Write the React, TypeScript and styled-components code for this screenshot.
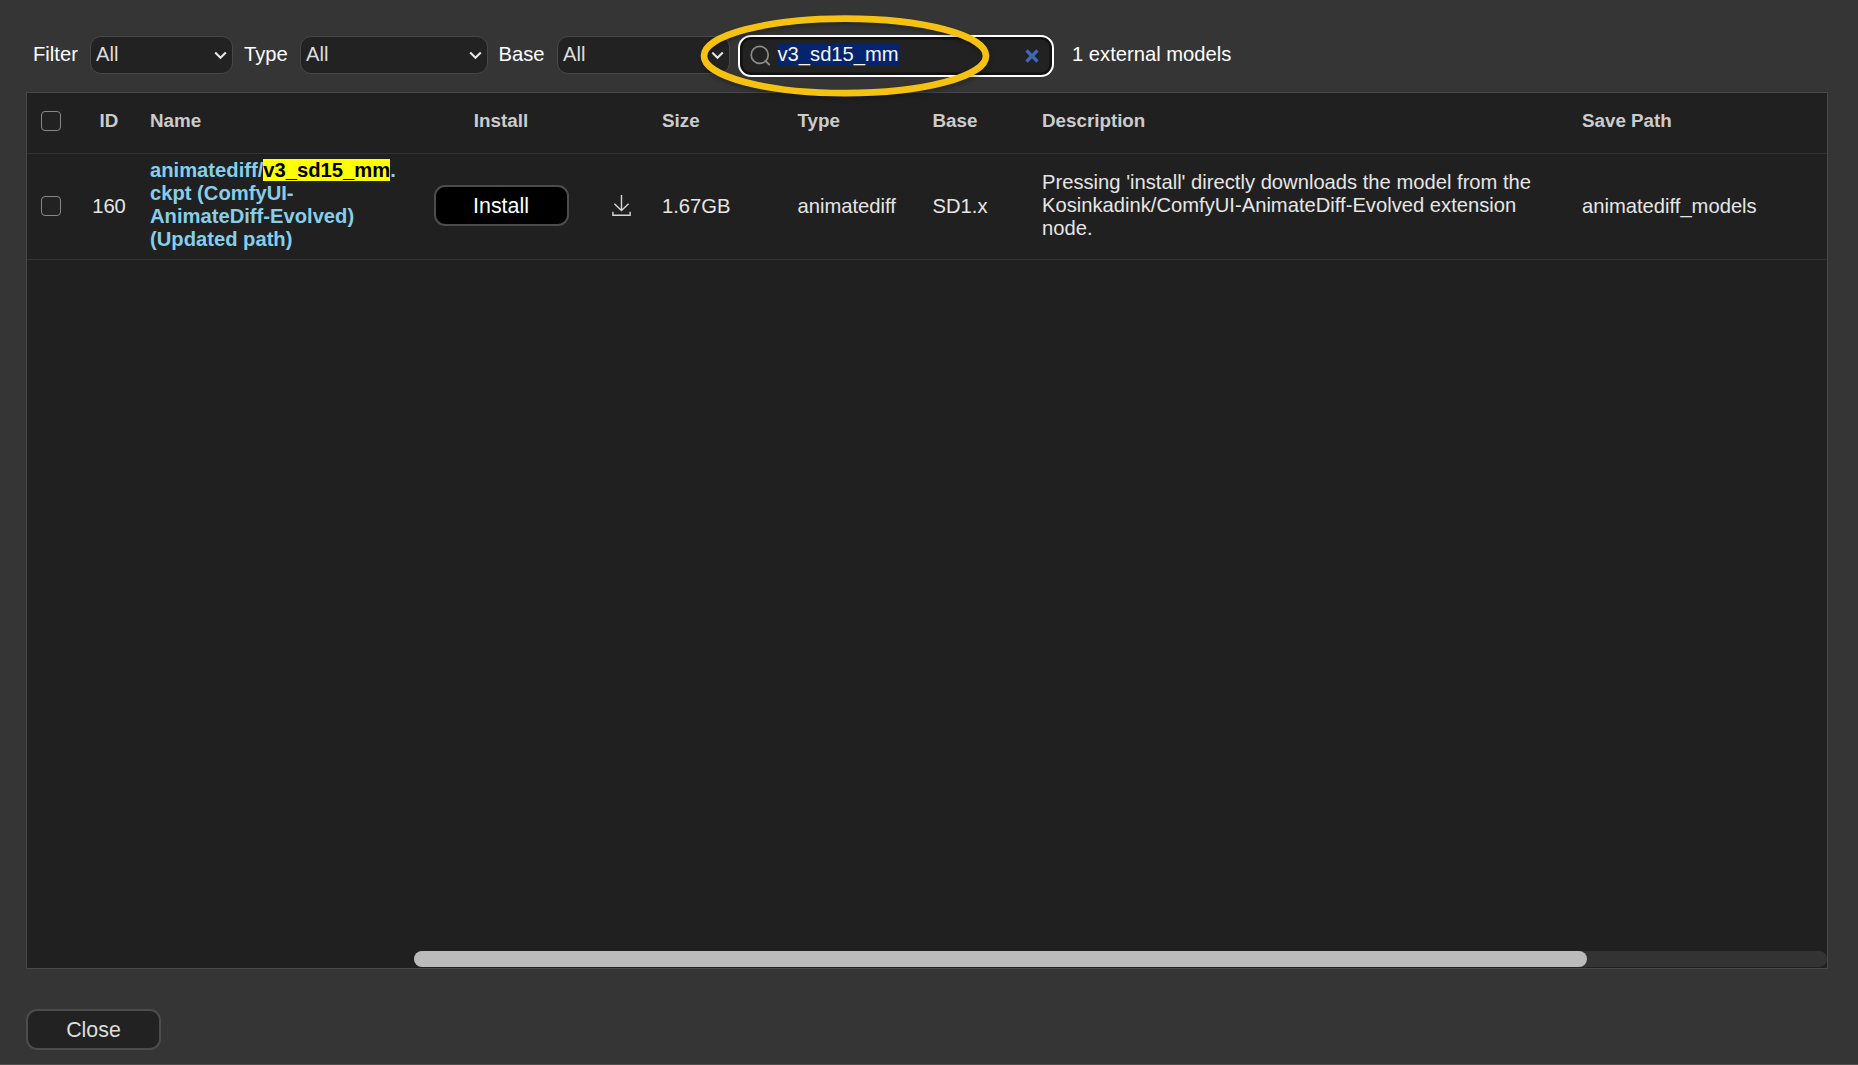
import React from "react";
import styled, { createGlobalStyle, css } from "styled-components";

const GlobalStyle = createGlobalStyle`
  * { box-sizing: border-box; }
  html, body { margin: 0; padding: 0; background: #353535; }
  body { font-family: "Liberation Sans", Arial, sans-serif; overflow: hidden; }
`;

const Dialog = styled.div`
  position: relative;
  display: flex;
  flex-direction: column;
  width: 1858px;
  height: 1065px;
  padding: 35px 30px 0 26px;
  background: #353535;
  border-bottom: 1px solid #505050;
  color: #fff;
  font-size: 20.2px;
  line-height: 23px;
`;

const Toolbar = styled.div`
  display: flex;
  align-items: center;
  height: 42px;
  padding-left: 7px;
  margin-bottom: 15px;
`;

const Label = styled.span<{ $width: number }>`
  width: ${(p) => p.$width}px;
  flex: none;
  padding-bottom: 3px;
  white-space: nowrap;
`;

const Select = styled.div<{ $width: number; $gap: number }>`
  display: flex;
  align-items: center;
  justify-content: space-between;
  flex: none;
  width: ${(p) => p.$width}px;
  height: 38px;
  margin-right: ${(p) => p.$gap}px;
  margin-bottom: 2px;
  padding: 0 5px 1px 5px;
  border: 1px solid #484848;
  border-radius: 11px;
  background: #222;
  color: #ddd;

  svg { margin-top: 2px; }
`;

const SearchBox = styled.div`
  display: flex;
  align-items: center;
  flex: none;
  width: 316px;
  height: 42px;
  margin-right: 18px;
  padding: 0 13px 0 10px;
  border: 2px solid #fff;
  border-radius: 13px;
  background: #222;
  box-shadow: inset 0 0 0 2.5px #111;
`;

const SelectedText = styled.span`
  margin: 0 auto 3px 6.5px;
  background: #05246e;
  color: #f4f4f4;
`;

const Count = styled.span`
  padding-bottom: 3px;
  white-space: nowrap;
`;

const Grid = styled.div`
  display: flex;
  flex-direction: column;
  height: 877px;
  border: 1px solid #484848;
  background: #202020;
`;

const Row = styled.div<{ $header?: boolean }>`
  display: grid;
  grid-template-columns: 48px 68px 271px 174px 67px 135.5px 135px 109.5px 540px 1fr;
  align-items: center;
  height: ${(p) => (p.$header ? 61 : 106)}px;
  border-bottom: 1px solid #323232;
  color: #e6e6e6;
  ${(p) =>
    p.$header &&
    css`
      color: #ccc;
      font-size: 18.8px;
      font-weight: bold;
    `}
`;

const Cell = styled.div<{ $center?: boolean; $lift?: number }>`
  display: flex;
  justify-content: ${(p) => (p.$center ? "center" : "flex-start")};
  padding: 0 ${(p) => (p.$center ? 0 : 13)}px ${(p) => p.$lift ?? 0}px ${(p) => (p.$center ? 0 : 7)}px;
  min-width: 0;
`;

const Checkbox = styled.span`
  width: 20px;
  height: 20px;
  border: 1px solid #888;
  border-radius: 4px;
  background: #222;
`;

const ModelLink = styled.b`
  min-width: 0;
  color: #87ceeb;
`;

const Mark = styled.mark`
  background: #ff0;
  color: #000;
`;

const Button = styled.button<{ $dark?: boolean }>`
  width: 135px;
  height: 41px;
  padding: 1px 0 0;
  border: 2px solid #4c4c4c;
  border-radius: 11px;
  background: ${(p) => (p.$dark ? "#000" : "#222")};
  color: ${(p) => (p.$dark ? "#fff" : "#ddd")};
  font-family: inherit;
  font-size: 21.4px;
`;

const ScrollTrack = styled.div`
  height: 16px;
  margin: auto 0 1px 386.5px;
  border-radius: 8px;
  background: #333;
`;

const ScrollThumb = styled.div`
  width: 1173.5px;
  height: 16px;
  border-radius: 8px;
  background: #bbb;
`;

const Footer = styled.div`
  padding-top: 40px;
`;

const Highlight = styled.svg`
  position: absolute;
  left: 691px;
  top: 6px;
  filter: drop-shadow(1px 3px 2px rgba(0, 0, 0, 0.25));
`;

const Chevron = () => (
  <svg width="13" height="9" viewBox="0 0 13 9" fill="none">
    <path d="M1.2 1.5 6.5 6.8 11.8 1.5" stroke="#e6e6e6" strokeWidth="2.1" />
  </svg>
);

const SearchIcon = () => (
  <svg width="21" height="22" viewBox="0 0 21 22" fill="none" stroke="#8a8a8a" strokeWidth="1.7">
    <circle cx="9.7" cy="9.9" r="8.5" />
    <path d="m15.6 16 3.6 3.6" strokeWidth="2" strokeLinecap="round" />
  </svg>
);

const ClearIcon = () => (
  <svg width="14" height="14" viewBox="0 0 14 14" fill="none">
    <path d="m1.5 1.5 11 11M12.5 1.5l-11 11" stroke="#3c68b4" strokeWidth="3.2" />
  </svg>
);

const DownloadIcon = () => (
  <svg width="20" height="23" viewBox="0 0 20 23" fill="none" stroke="#d6d6d6" strokeWidth="1.4">
    <path d="M9.5 1v15.3M2.4 9.7l7.1 6.8 7.1-6.8" />
    <path d="M.9 17.8v3.4h17.2v-3.4" />
  </svg>
);

const filters = [
  { label: "Filter", labelWidth: 57, width: 143, gap: 11 },
  { label: "Type", labelWidth: 56, width: 188, gap: 10.5 },
  { label: "Base", labelWidth: 58.5, width: 173, gap: 8 },
];

export default function App() {
  return (
    <>
      <GlobalStyle />
      <Dialog>
        <Toolbar>
          {filters.map((f) => (
            <React.Fragment key={f.label}>
              <Label $width={f.labelWidth}>{f.label}</Label>
              <Select $width={f.width} $gap={f.gap}>
                All
                <Chevron />
              </Select>
            </React.Fragment>
          ))}
          <SearchBox>
            <SearchIcon />
            <SelectedText>v3_sd15_mm</SelectedText>
            <ClearIcon />
          </SearchBox>
          <Count>1 external models</Count>
        </Toolbar>

        <Grid>
          <Row $header>
            <Cell $center $lift={4}><Checkbox /></Cell>
            <Cell $center $lift={5}>ID</Cell>
            <Cell $lift={5}>Name</Cell>
            <Cell $center $lift={5}>Install</Cell>
            <Cell />
            <Cell $lift={5}>Size</Cell>
            <Cell $lift={5}>Type</Cell>
            <Cell $lift={5}>Base</Cell>
            <Cell $lift={5}>Description</Cell>
            <Cell $lift={5}>Save Path</Cell>
          </Row>
          <Row>
            <Cell $center $lift={2}><Checkbox /></Cell>
            <Cell $center>160</Cell>
            <Cell $lift={3}>
              <ModelLink>
                animatediff/<Mark>v3_sd15_mm</Mark>.<br />
                ckpt (ComfyUI-<br />
                AnimateDiff-Evolved)<br />
                (Updated path)
              </ModelLink>
            </Cell>
            <Cell $center $lift={2}><Button $dark>Install</Button></Cell>
            <Cell $center $lift={2}><DownloadIcon /></Cell>
            <Cell>1.67GB</Cell>
            <Cell>animatediff</Cell>
            <Cell>SD1.x</Cell>
            <Cell $lift={3}>
              Pressing 'install' directly downloads the model from the Kosinkadink/ComfyUI-AnimateDiff-Evolved extension node.
            </Cell>
            <Cell>animatediff_models</Cell>
          </Row>
          <ScrollTrack>
            <ScrollThumb />
          </ScrollTrack>
        </Grid>

        <Footer>
          <Button>Close</Button>
        </Footer>

        <Highlight width="308" height="100" viewBox="0 0 308 100">
          <ellipse cx="154" cy="49.9" rx="141" ry="37.2" fill="none" stroke="#f6c212" strokeWidth="6.7" />
        </Highlight>
      </Dialog>
    </>
  );
}
